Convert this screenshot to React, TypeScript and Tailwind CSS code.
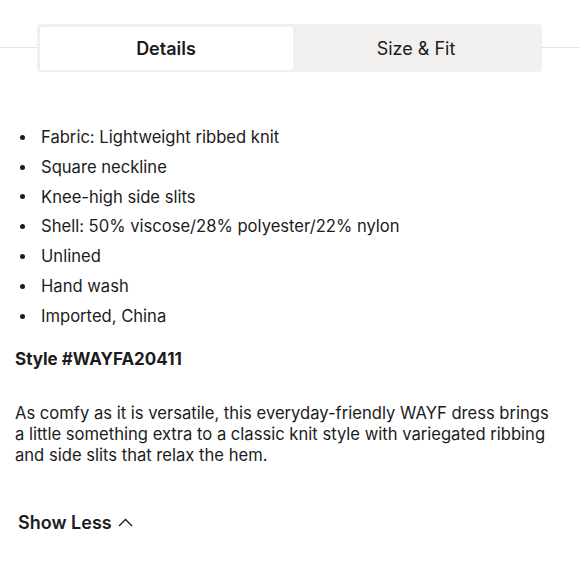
import React from "react";

const items = [
  "Fabric: Lightweight ribbed knit",
  "Square neckline",
  "Knee-high side slits",
  "Shell: 50% viscose/28% polyester/22% nylon",
  "Unlined",
  "Hand wash",
  "Imported, China",
];

export default function App() {
  return (
    <div
      className="w-[580px] h-[580px] bg-white text-[#1c1c1c] overflow-hidden"
      style={{ fontFamily: 'Inter, "Liberation Sans", Arial, sans-serif' }}
    >
      <div className="relative pt-[24px]">
        <div className="absolute left-0 right-0 top-[47px] h-px bg-[#e3e3e3]" />
        <div className="relative ml-[37px] w-[505px] h-[48px] bg-[#f1f0ef] rounded-[4px] p-[2.5px] flex">
          <div className="w-[253px] h-full bg-white rounded-[3px] flex items-center justify-center text-[18px] font-semibold pt-[1px]">
            Details
          </div>
          <div className="flex-1 flex items-center justify-center text-[18px] pt-[1px]">
            Size &amp; Fit
          </div>
        </div>
      </div>

      <ul className="mt-[50.5px] flex flex-col">
        {items.map((t) => (
          <li key={t} className="flex items-center h-[29.8px] text-[16.6px]">
            <span className="w-[41px] pl-[20px] flex items-center">
              <span className="block w-[5px] h-[5px] rounded-full bg-[#1c1c1c]" />
            </span>
            <span>{t}</span>
          </li>
        ))}
      </ul>

      <div className="mt-[16px] pl-[15px] text-[17px] font-bold">Style #WAYFA20411</div>

      <p className="mt-[30px] pl-[15px] text-[16.6px] leading-[21px] whitespace-nowrap">
        As comfy as it is versatile, this everyday-friendly WAYF dress brings
        <br />
        a little something extra to a classic knit style with variegated ribbing
        <br />
        and side slits that relax the hem.
      </p>

      <div className="mt-[43px] pl-[18px] flex items-center gap-[6px] text-[18px] font-semibold">
        <span>Show Less</span>
        <svg width="15" height="9" viewBox="0 0 15 9" fill="none" stroke="#1c1c1c" strokeWidth="1.4">
          <path d="M1 8 L7.5 1.5 L14 8" />
        </svg>
      </div>
    </div>
  );
}
